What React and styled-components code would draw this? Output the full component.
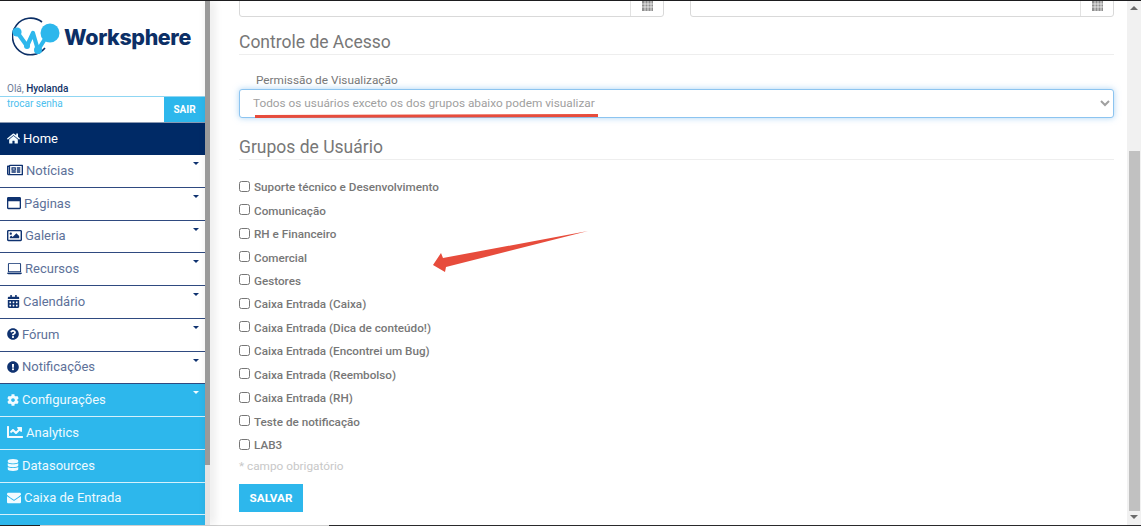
import styled, { createGlobalStyle } from "styled-components";
import {
  FaHome,
  FaRegNewspaper,
  FaRegWindowMaximize,
  FaRegImage,
  FaCalendarAlt,
  FaQuestionCircle,
  FaExclamationCircle,
  FaCog,
  FaChartLine,
  FaDatabase,
  FaEnvelope,
} from "react-icons/fa";
import { BsLaptop } from "react-icons/bs";

const GlobalStyle = createGlobalStyle`
  html, body {
    margin: 0;
    height: 100%;
    overflow: hidden;
    background: #fff;
  }
  body {
    font-family: Roboto, "Liberation Sans", sans-serif;
  }
  * {
    box-sizing: border-box;
  }
`;

const Page = styled.div`
  width: 1141px;
  height: 526px;
  display: flex;
  flex-direction: column;
  overflow: hidden;
`;

const TopLine = styled.div`
  height: 1px;
  flex: none;
  background: #1d1d1f;
`;

const BottomLine = styled.div`
  height: 1px;
  flex: none;
  background: linear-gradient(
    to right,
    #222 0 40px,
    #cfcfcf 40px 329px,
    #2a2a2c 329px
  );
`;

const Body = styled.div`
  flex: 1;
  min-height: 0;
  display: flex;
  position: relative;
`;

const Sidebar = styled.aside`
  width: 205px;
  flex: none;
  display: flex;
  flex-direction: column;
  overflow: hidden;
`;

const SideScroll = styled.div`
  width: 5px;
  flex: none;
  background: linear-gradient(to bottom, #9a9a9a 0 464px, #e4e4e4 464px);
  box-shadow: 3px 0 10px rgba(0, 0, 0, 0.14);
`;

const LogoBar = styled.div`
  height: 81px;
  flex: none;
  display: flex;
  align-items: flex-start;
  gap: 2px;
  padding: 16px 0 0 12px;
`;

const LogoText = styled.span`
  font-family: Inter, "Liberation Sans", sans-serif;
  font-weight: 800;
  font-size: 21.4px;
  line-height: 40px;
  letter-spacing: -0.35px;
  color: #0c2f66;
`;

const Greeting = styled.div`
  height: 14px;
  flex: none;
  padding-left: 7px;
  font-size: 10px;
  line-height: 14px;
  color: #6d7c98;

  b {
    font-weight: 500;
    color: #123468;
  }
`;

const UserRow = styled.div`
  height: 27px;
  flex: none;
  display: flex;
  justify-content: space-between;
  border-top: 1px solid #8fd6f3;
  border-bottom: 1px solid #8a99b2;
`;

const ChangePassword = styled.a`
  padding: 0 0 0 7px;
  font-size: 10px;
  line-height: 13px;
  color: #4dc0ee;
`;

const LogoutButton = styled.button`
  width: 41px;
  border: none;
  padding: 0;
  background: #2db7ec;
  color: #fff;
  font-family: inherit;
  font-size: 10px;
  font-weight: 700;
`;

const NavItem = styled.div`
  height: ${({ $home }) => ($home ? "32px" : "32.75px")};
  flex: none;
  display: flex;
  align-items: center;
  gap: 3px;
  padding: 0 6px ${({ $home }) => ($home ? "2px" : "1px")} 7px;
  font-size: 13px;
  color: ${({ $tone }) =>
    $tone === "light" ? "#5d7199" : $tone === "home" ? "#fff" : "#eefaff"};
  background: ${({ $tone }) =>
    $tone === "home" ? "#002a66" : $tone === "light" ? "#fff" : "#2db7ec"};
  border-bottom: ${({ $home, $tone }) =>
    $home ? "none" : $tone === "light" ? "1px solid #2f4a80" : "1px solid #d5f1fc"};

  svg {
    flex: none;
    color: ${({ $tone }) => ($tone === "light" ? "#0f3270" : "#f2fbff")};
  }
`;

const Caret = styled.i`
  margin-left: auto;
  align-self: flex-start;
  margin-top: 7px;
  width: 0;
  height: 0;
  border-left: 3.5px solid transparent;
  border-right: 3.5px solid transparent;
  border-top: 3px solid ${({ $light }) => ($light ? "#f2fbff" : "#0f3270")};
`;

const Main = styled.main`
  flex: 1;
  min-width: 0;
  padding: 0 13px 0 29px;
  overflow: hidden;
  display: flex;
  flex-direction: column;
`;

const DateRow = styled.div`
  display: grid;
  grid-template-columns: 425px 424px;
  justify-content: space-between;
  margin-top: -19px;
`;

const DateField = styled.div`
  height: 35px;
  display: flex;
  justify-content: flex-end;
  border: 1px solid #d9d9d9;
  border-radius: 3px;
`;

const DateAddon = styled.div`
  width: 33px;
  display: flex;
  align-items: center;
  justify-content: center;
  padding-top: 12px;
  border-left: 1px solid #e2e2e2;
`;

const SectionTitle = styled.h2`
  margin: ${({ $top }) => $top}px 0 0;
  height: 23px;
  flex: none;
  font-size: 17.5px;
  font-weight: 400;
  line-height: 20px;
  color: #777;
  border-bottom: 1px solid #eee;
`;

const FieldLabel = styled.label`
  margin: 18px 0 2px 17px;
  font-size: 11.8px;
  line-height: 14px;
  color: #777;
`;

const Select = styled.select`
  height: 29px;
  flex: none;
  width: 100%;
  padding: 0 0 1px 9px;
  border: 1px solid #8cc4f0;
  border-radius: 3px;
  background: #fff;
  box-shadow: 0 0 6px rgba(102, 175, 233, 0.55);
  outline: none;
  font-family: inherit;
  font-size: 11.8px;
  color: #a0a0a0;
`;

const GroupList = styled.div`
  margin-top: 15.5px;
  display: flex;
  flex-direction: column;
`;

const GroupRow = styled.label`
  height: 23.45px;
  display: flex;
  align-items: center;
  font-size: 11.7px;
  font-weight: 500;
  color: #777;

  input {
    width: 11px;
    height: 11px;
    margin: 0 4px 2px 0;
  }
`;

const RequiredNote = styled.div`
  margin-top: 2.5px;
  font-size: 11.8px;
  line-height: 14px;
  color: #c8c8c8;
`;

const SaveButton = styled.button`
  margin-top: 11px;
  width: 64px;
  height: 28px;
  flex: none;
  border: none;
  padding: 0;
  background: #2db7ec;
  color: #fff;
  font-family: inherit;
  font-size: 11.7px;
  font-weight: 700;
`;

const PageScroll = styled.div`
  width: 14px;
  flex: none;
  display: flex;
  flex-direction: column;
  align-items: center;
  background: #f1f1f1;
`;

const ScrollArrow = styled.div`
  height: ${({ $down }) => ($down ? "14px" : "150px")};
  flex: none;
  padding-top: ${({ $down }) => ($down ? "4px" : "5px")};

  &::before {
    content: "";
    display: block;
    width: 0;
    height: 0;
    border-left: 4px solid transparent;
    border-right: 4px solid transparent;
    ${({ $down }) =>
      $down ? "border-top: 4px solid #6b6b6b;" : "border-bottom: 4px solid #6b6b6b;"}
  }
`;

const ScrollThumb = styled.div`
  width: 11px;
  height: 360px;
  flex: none;
  background: #c1c1c1;
`;

const Annotation = styled.svg`
  position: absolute;
  left: 0;
  top: -1px;
  width: 1141px;
  height: 526px;
  pointer-events: none;
`;

const navItems = [
  { label: "Notícias", Icon: FaRegNewspaper, size: 16, tone: "light", caret: true },
  { label: "Páginas", Icon: FaRegWindowMaximize, size: 14, tone: "light", caret: true },
  { label: "Galeria", Icon: FaRegImage, size: 15, tone: "light", caret: true },
  { label: "Recursos", Icon: BsLaptop, size: 15, tone: "light", caret: true },
  { label: "Calendário", Icon: FaCalendarAlt, size: 13, tone: "light", caret: true },
  { label: "Fórum", Icon: FaQuestionCircle, size: 12, tone: "light", caret: true },
  { label: "Notificações", Icon: FaExclamationCircle, size: 12, tone: "light", caret: true },
  { label: "Configurações", Icon: FaCog, size: 12, tone: "blue", caret: true },
  { label: "Analytics", Icon: FaChartLine, size: 16, tone: "blue" },
  { label: "Datasources", Icon: FaDatabase, size: 12, tone: "blue" },
  { label: "Caixa de Entrada", Icon: FaEnvelope, size: 14, tone: "blue" },
  { label: "", tone: "blue" },
];

const groups = [
  "Suporte técnico e Desenvolvimento",
  "Comunicação",
  "RH e Financeiro",
  "Comercial",
  "Gestores",
  "Caixa Entrada (Caixa)",
  "Caixa Entrada (Dica de conteúdo!)",
  "Caixa Entrada (Encontrei um Bug)",
  "Caixa Entrada (Reembolso)",
  "Caixa Entrada (RH)",
  "Teste de notificação",
  "LAB3",
];

function LogoMark() {
  return (
    <svg width="50" height="40" viewBox="0 0 50 40" fill="none">
      <path
        d="M30 5 A18.3 18.3 0 1 0 33 31"
        stroke="#0c2f66"
        strokeWidth="1.6"
      />
      <path
        d="M5 15 L15 29 L21 16 L26 33 L38 14"
        stroke="#2db7ec"
        strokeWidth="4.2"
        strokeLinejoin="round"
      />
      <circle cx="5" cy="15" r="4.6" fill="#2db7ec" />
      <circle cx="15" cy="29" r="3" fill="#2db7ec" />
      <circle cx="26" cy="33" r="4" fill="#2db7ec" />
      <circle cx="38" cy="16" r="9.5" fill="#2db7ec" />
    </svg>
  );
}

function CalendarGlyph() {
  return (
    <svg width="11" height="10" viewBox="0 0 11 10">
      <rect width="11" height="10" fill="#8f8f8f" />
      <path d="M0 3h11M0 6h11M3 0v10M6 0v10M9 0v10" stroke="#fff" strokeWidth="0.7" />
    </svg>
  );
}

export default function App() {
  return (
    <Page>
      <GlobalStyle />
      <TopLine />
      <Body>
        <Sidebar>
          <LogoBar>
            <LogoMark />
            <LogoText>Worksphere</LogoText>
          </LogoBar>
          <Greeting>
            Olá, <b>Hyolanda</b>
          </Greeting>
          <UserRow>
            <ChangePassword>trocar senha</ChangePassword>
            <LogoutButton>SAIR</LogoutButton>
          </UserRow>
          <NavItem $home $tone="home">
            <FaHome size={13} />
            Home
          </NavItem>
          {navItems.map(({ label, Icon, size, tone, caret }) => (
            <NavItem key={label || "more"} $tone={tone}>
              {Icon && <Icon size={size} />}
              {label}
              {caret && <Caret $light={tone === "blue"} />}
            </NavItem>
          ))}
        </Sidebar>
        <SideScroll />
        <Main>
          <DateRow>
            <DateField>
              <DateAddon>
                <CalendarGlyph />
              </DateAddon>
            </DateField>
            <DateField>
              <DateAddon>
                <CalendarGlyph />
              </DateAddon>
            </DateField>
          </DateRow>
          <SectionTitle $top={15}>Controle de Acesso</SectionTitle>
          <FieldLabel>Permissão de Visualização</FieldLabel>
          <Select defaultValue="except">
            <option value="except">
              Todos os usuários exceto os dos grupos abaixo podem visualizar
            </option>
          </Select>
          <SectionTitle $top={19}>Grupos de Usuário</SectionTitle>
          <GroupList>
            {groups.map((group) => (
              <GroupRow key={group}>
                <input type="checkbox" />
                {group}
              </GroupRow>
            ))}
          </GroupList>
          <RequiredNote>* campo obrigatório</RequiredNote>
          <SaveButton>SALVAR</SaveButton>
        </Main>
        <PageScroll>
          <ScrollArrow />
          <ScrollThumb />
          <ScrollArrow $down />
        </PageScroll>
        {/* red marks drawn over the screenshot */}
        <Annotation viewBox="0 0 1141 526">
          <path d="M255 116.5 L598 115.5" stroke="#e74c3c" strokeWidth="3" />
          <polygon
            points="433,265 441,253 443,258 588,231 446,267 445,272"
            fill="#e74c3c"
          />
        </Annotation>
      </Body>
      <BottomLine />
    </Page>
  );
}
